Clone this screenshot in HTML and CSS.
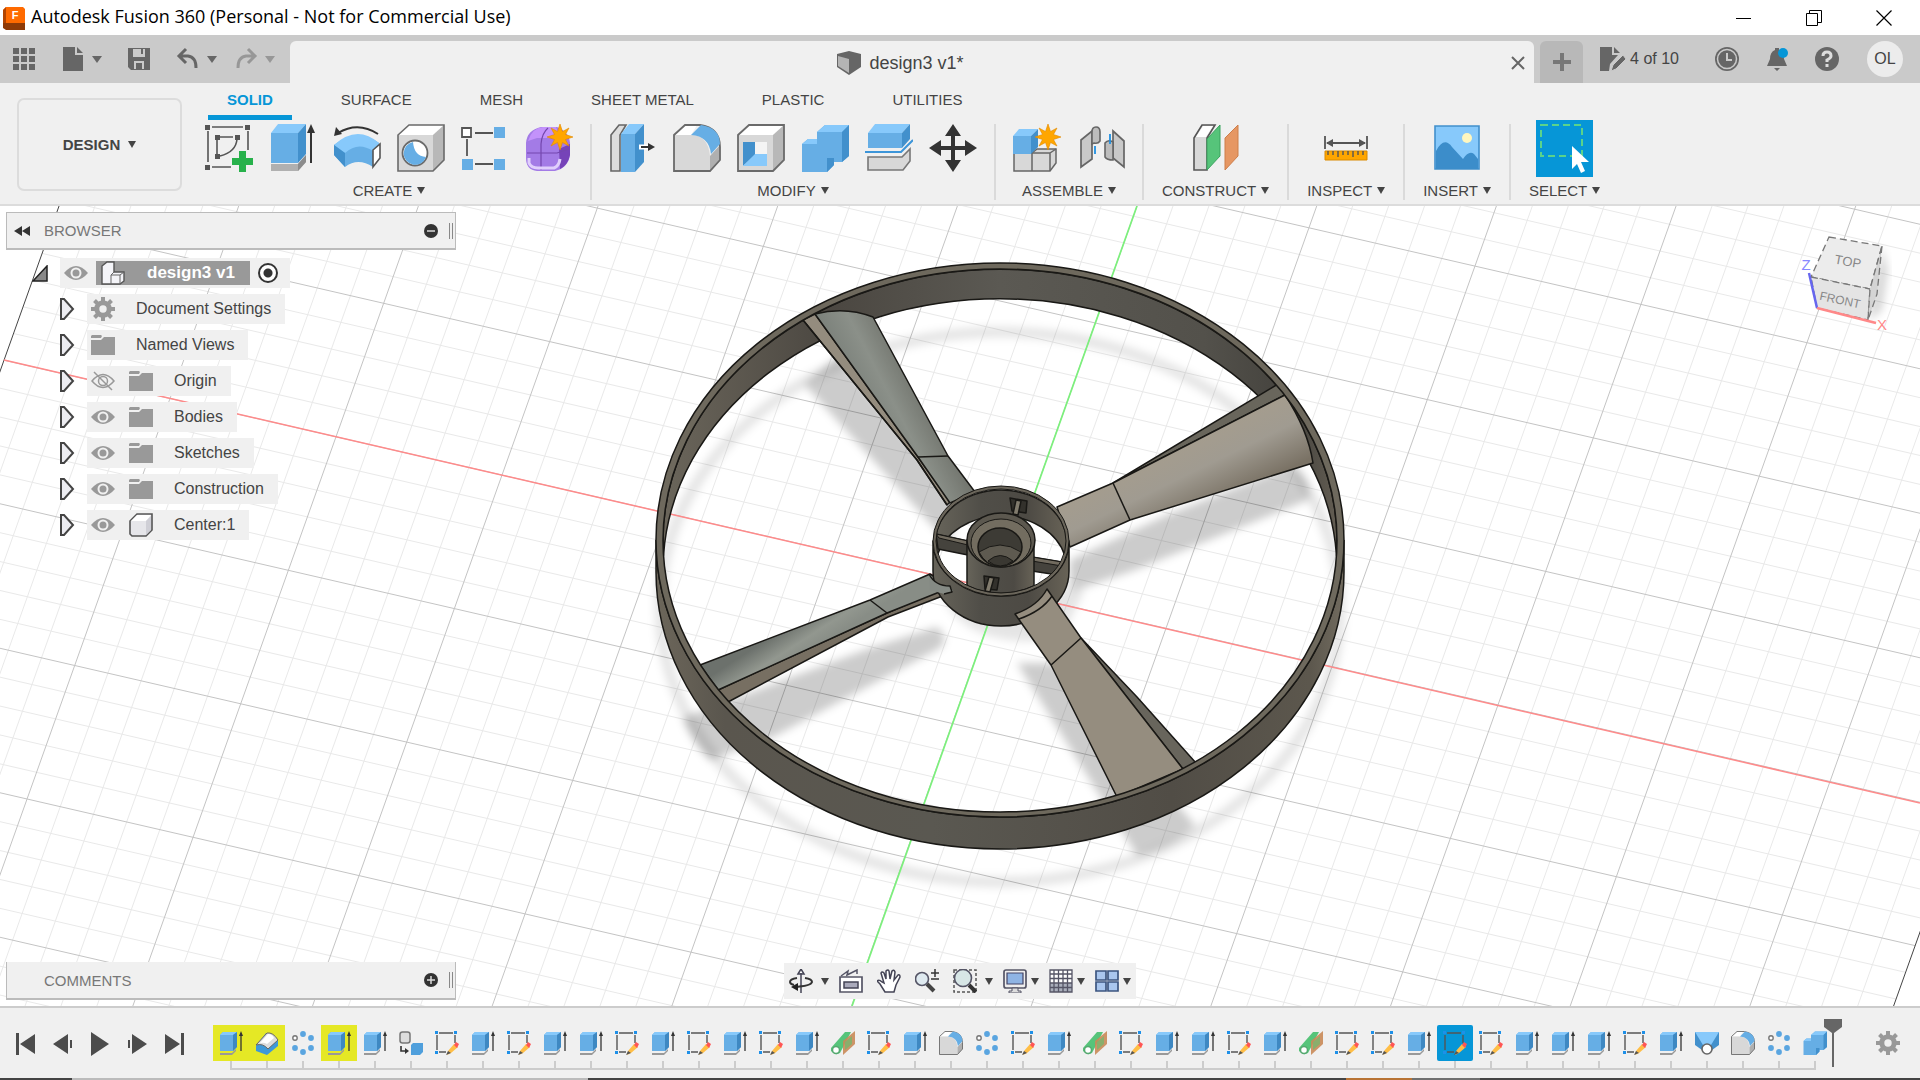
FILE: index.html
```html
<!DOCTYPE html>
<html lang="en">
<head>
    <meta charset="UTF-8">
    <meta name="viewport" content="width=device-width, initial-scale=1.0">
    <title>Autodesk Fusion 360</title>
    <link rel="stylesheet" href="styles.css">
</head>
<body>

<!-- Icon library -->
<svg class="defs" aria-hidden="true">
    <symbol id="i-extrude" viewBox="0 0 48 48">
        <path d="M2 40H29L37 31V38L29 47H2Z" fill="#b0b0b0"/><path d="M29 40 37 31V38L29 47Z" fill="#8c8c8c"/>
        <path d="M2 9H29V39H2Z" fill="#66aee5"/><path d="M2 9 9 0H37L29 9Z" fill="#87c9fb"/><path d="M29 9 37 0V30L29 39Z" fill="#4290cc"/>
        <path d="M42 39V6" stroke="#333" stroke-width="2"/><path d="M42 0 46 9H38Z" fill="#333"/>
    </symbol>
    <symbol id="i-sketch" viewBox="0 0 48 48">
        <path d="M7 3H38M3 7V38M43 7V26M7 43H26M14 13H28M12 16V30M32 15Q31 28 15 32" fill="none" stroke="#555" stroke-width="1.6"/>
        <path d="M0 1H5V6H0ZM40 1H45V6H40ZM0 41H5V46H0ZM10 11H15V16H10ZM30 11H35V16H30ZM10 30H15V35H10Z" fill="#555"/>
        <path d="M34 27H41V34H48V41H41V48H34V41H27V34H34Z" fill="#27b14b"/>
    </symbol>
    <symbol id="i-revolve" viewBox="0 0 48 48">
        <path d="M1 21Q24 3 46 19L40 43Q25 33 12 43L1 31Z" fill="#66aee5"/>
        <path d="M1 21Q24 0 46 19L40 27Q25 17 12 29Z" fill="#87c9fb"/><path d="M1 21 12 29V43L1 31Z" fill="#4290cc"/>
        <path d="M40 26 47 20V34L40 43Z" fill="#fff" stroke="#555" stroke-width="1.6"/>
        <path d="M5 9Q25-3 45 10" fill="none" stroke="#333" stroke-width="2"/><path d="M1 12 3 3 9 10Z" fill="#333"/>
    </symbol>
    <symbol id="i-hole" viewBox="0 0 48 48">
        <path d="M1 11 12 1H47L36 11Z" fill="#fff"/><path d="M36 11 47 1V36L36 47Z" fill="#b8b8b8"/><path d="M1 11H36V47H1Z" fill="#d8d8d8"/>
        <path d="M1 11 12 1H47V36L36 47H1Z" fill="none" stroke="#6a6a6a" stroke-width="1.6"/>
        <circle cx="18" cy="29" r="12.5" fill="#fff" stroke="#6a6a6a" stroke-width="1.8"/>
        <path d="M16 18A11.5 11.5 0 1 0 29 33Q17 32 16 18Z" fill="#66aee5"/>
    </symbol>
    <symbol id="i-pattern" viewBox="0 0 48 48">
        <path d="M14 9H32M6 15V32M14 40H32" stroke="#555" stroke-width="1.8"/>
        <path d="M1 4H10V13H1Z" fill="#fff" stroke="#555" stroke-width="1.8"/>
        <path d="M33 3H44V14H33ZM1 35H12V46H1ZM33 35H44V46H33Z" fill="#66aee5"/>
    </symbol>
    <symbol id="i-form" viewBox="0 0 48 48">
        <path d="M1 19Q2 6 16 3H32Q46 9 45 22V31Q43 44 30 47H12Q1 46 1 34Z" fill="#a37be6"/>
        <path d="M3 17Q7 4 18 3H31L36 15Q34 14 27 14H12Z" fill="#c392fb"/><path d="M34 25 45 20V31Q43 41 35 45Z" fill="#7643b8"/>
        <path d="M16 46V20Q17 9 23 4M2 29H32L44 25" stroke="#7447ae" stroke-width="1.2" fill="none"/>
        <path d="M4 34V39Q6 44 13 44H29Q34 42 35 35" fill="none" stroke="#e0cffc" stroke-width="3"/>
        <use href="#i-star" x="22" y="0" width="26" height="26"/>
    </symbol>
    <symbol id="i-star" viewBox="0 0 26 26">
        <path d="M13 0 15.500 7.500 22 4 18.500 10.500 26 13 18.500 15.500 22 22 15.500 18.500 13 26 10.500 18.500 4 22 7.500 15.500 0 13 7.500 10.500 4 4 10.500 7.500Z" fill="#ffa600" stroke="#e08a00" stroke-width=".6"/>
    </symbol>
    <symbol id="i-press" viewBox="0 0 48 48">
        <path d="M2 11 10 1H17L11 11V47H2Z" fill="#ddd" stroke="#666" stroke-width="1.6"/>
        <path d="M12 10H26V48H12Z" fill="#66aee5"/><path d="M12 10 20 0H35L26 10Z" fill="#87c9fb"/><path d="M26 10 35 0V38L26 48Z" fill="#4290cc"/>
        <path d="M30 23H40" stroke="#fff" stroke-width="5"/><path d="M32 23H42" stroke="#333" stroke-width="2"/><path d="M46 23 39 19V27Z" fill="#333"/>
    </symbol>
    <symbol id="i-fillet" viewBox="0 0 48 48">
        <path d="M1 11 12 1H24L18 11Z" fill="#fff"/><path d="M1 11H18Q35 11 37 32V47H1Z" fill="#d8d8d8"/><path d="M37 32 47 21V36L37 47Z" fill="#b0b0b0"/>
        <path d="M1 47V11L12 1H27Q47 4 47 23V36L37 47Z" fill="none" stroke="#6a6a6a" stroke-width="1.8"/>
        <path d="M18 11 28 1Q47 4 47 20L38 30Q36 12 18 11Z" fill="#66aee5"/>
    </symbol>
    <symbol id="i-shell" viewBox="0 0 48 48">
        <path d="M1 11 12 1H47L36 11Z" fill="#fff"/><path d="M36 11 47 1V36L36 47Z" fill="#b8b8b8"/><path d="M1 11H36V47H1Z" fill="#d8d8d8"/>
        <path d="M1 11 12 1H47V36L36 47H1Z" fill="none" stroke="#6a6a6a" stroke-width="1.8"/>
        <path d="M6 18H30V42H6Z" fill="#f4f4f4"/><path d="M6 18H18V31L6 42Z" fill="#4290cc"/><path d="M18 30H30V42H6Z" fill="#87c9fb"/>
    </symbol>
    <symbol id="i-combine" viewBox="0 0 48 48">
        <path d="M1 20 7 15H16V8L24 1H48V32L41 38H33V41L26 48H1Z" fill="#66aee5"/>
        <path d="M16 8 24 1H48L41 8ZM1 20 7 15H16V20Z" fill="#87c9fb"/><path d="M41 8 48 1V32L41 38ZM33 34V41L26 48V34Z" fill="#4290cc"/>
    </symbol>
    <symbol id="i-split" viewBox="0 0 48 48">
        <path d="M3 9H37V24H3Z" fill="#66aee5"/><path d="M3 9 10 0H45L37 9Z" fill="#87c9fb"/><path d="M37 9 45 0V15L37 24Z" fill="#4290cc"/>
        <path d="M0 28H36L48 16" fill="none" stroke="#3c95d9" stroke-width="2"/>
        <path d="M3 33H37L45 25V37L38 46H3Z" fill="#d8d8d8" stroke="#777" stroke-width="1.6"/>
    </symbol>
    <symbol id="i-move" viewBox="0 0 48 48">
        <path d="M24 6V42M6 24H42" stroke="#333" stroke-width="4"/>
        <path d="M24 0 32 12H16ZM24 48 32 36H16ZM0 24 12 16V32ZM48 24 36 16V32Z" fill="#333"/>
    </symbol>
    <symbol id="i-newcomp" viewBox="0 0 48 48">
        <path d="M1 29H19V47H1ZM19 29 24 25H43V39L37 47H19Z" fill="#d8d8d8" stroke="#666" stroke-width="1.5"/><path d="M19 29H37V47M37 29 43 25" fill="none" stroke="#666" stroke-width="1.5"/>
        <path d="M0 12H18V30H0Z" fill="#66aee5"/><path d="M0 12 6 5H25L18 12Z" fill="#87c9fb"/><path d="M18 12 25 5V23L18 30Z" fill="#4290cc"/>
        <use href="#i-star" x="22" y="0" width="26" height="26"/>
    </symbol>
    <symbol id="i-joint" viewBox="0 0 48 48">
        <path d="M4 16 15 7V35L4 43ZM36 7 47 17V43L36 34Z" fill="#c9c9c9" stroke="#666" stroke-width="1.7"/>
        <path d="M15 8Q15 3 19 3T23 8V17Q21 20 17 19L15 20ZM28 19Q31 15 36 18V36Q30 36 28 33Z" fill="#bdbdbd" stroke="#666" stroke-width="1.6"/>
        <path d="M18 22V30M33 10V20" stroke="#1f8fe0" stroke-width="1.8"/>
    </symbol>
    <symbol id="i-construct" viewBox="0 0 48 48">
        <path d="M2 14 10 1H23L15 14V46H2Z" fill="#d8d8d8" stroke="#555" stroke-width="1.6"/><path d="M4 13 11 2H21L14 13Z" fill="#fff"/>
        <path d="M15 15 28 1V32L15 46Z" fill="#56c47a" stroke="#3aa35f"/><path d="M33 14 46 1V32L33 46Z" fill="#e69763" stroke="#cd7e4b"/>
    </symbol>
    <symbol id="i-measure" viewBox="0 0 48 48">
        <path d="M3 12V25M45 12V25M5 19H43" stroke="#555" stroke-width="1.8"/><path d="M4 19 11 15V23ZM44 19 37 15V23Z" fill="#555"/>
        <path d="M3 27H45V36H3Z" fill="#ffa600" stroke="#d98a00"/><path d="M6 27V31M11 27V31M16 27V33M21 27V31M26 27V31M31 27V33M36 27V31M41 27V31" stroke="#555" stroke-width="1.4"/>
    </symbol>
    <symbol id="i-image" viewBox="0 0 48 48">
        <path d="M2 2H46V45H2Z" fill="#87c9fb" stroke="#4290cc" stroke-width="1.6"/><circle cx="34" cy="14" r="5" fill="#fff7bf"/>
        <path d="M3 27Q11 12 19 23L30 35Q36 26 41 30L45 35V45H3Z" fill="#3c8dca"/>
    </symbol>
    <symbol id="i-select" viewBox="0 0 57 57">
        <path d="M5 5H46V36H5Z" fill="none" stroke="#5bd38a" stroke-width="2" stroke-dasharray="7 4"/>
        <path d="M36 26V49L41 44 45 53 49 51 45 42H53Z" fill="#fff"/>
    </symbol>
    <symbol id="i-eye" viewBox="0 0 24 24"><path d="M0 12Q12-2 24 12Q12 26 0 12Z" fill="#999"/><circle cx="12" cy="12" r="4.500" fill="#999" stroke="#f0f0f0" stroke-width="2"/></symbol>
    <symbol id="i-eyeoff" viewBox="0 0 24 24"><path d="M1 12Q12-1 23 12Q12 25 1 12ZM3 3 21 21" fill="none" stroke="#999" stroke-width="1.5"/><circle cx="12" cy="12" r="4.500" fill="none" stroke="#999" stroke-width="1.5"/></symbol>
    <symbol id="i-folder" viewBox="0 0 24 24"><path d="M0 3 1 2H10L11 3 10 5H0ZM0 7H10L13 4H24V22H0Z" fill="#999"/></symbol>
    <symbol id="i-gear" viewBox="0 0 24 24"><circle cx="12" cy="12" r="6.200" fill="none" stroke="#999" stroke-width="5"/><path d="M12 0V5M12 19V24M0 12H5M19 12H24M3.500 3.500 7 7M17 17 20.500 20.500M20.500 3.500 17 7M7 17 3.500 20.500" stroke="#999" stroke-width="4"/></symbol>
    <symbol id="i-box" viewBox="0 0 24 24"><path d="M1 8 8 1H23V17L17 23H3L1 21Z" fill="#e6e6ea" stroke="#555" stroke-width="1.600"/><path d="M2 8 8 2H22L17 8Z" fill="#fff"/><path d="M17 8 22 3V17L17 22Z" fill="#cfcfd6"/></symbol>
    <symbol id="i-boxes" viewBox="0 0 24 24"><path d="M1 5 6 1H13V11H18L23 11V20L19 23H1Z" fill="#f4f4f8" stroke="#555" stroke-width="1.400"/><path d="M10 14H19V23M10 14V23M13 11 10 14M19 14 23 11" fill="none" stroke="#666"/></symbol>
    <symbol id="i-arrow" viewBox="0 0 16 24"><path d="M2 2H5L14 12 5 22H2Z" fill="#ececf1" stroke="#444" stroke-width="2"/></symbol>
    <!-- timeline -->
    <symbol id="t-extrude" viewBox="0 0 24 24">
        <path d="M1 22H13L17 18V20L13 24H1Z" fill="#999"/><path d="M1 4 4 1H18V16L14 20H1Z" fill="#66aee5"/><path d="M1 4 4 1H18L14 4Z" fill="#87c9fb"/><path d="M14 4 18 1V16L14 20Z" fill="#3e88c2"/>
        <path d="M22 4V20" stroke="#333" stroke-width="1.300"/><path d="M22 0 24 5H20Z" fill="#333"/>
    </symbol>
    <symbol id="t-sketch" viewBox="0 0 24 24">
        <path d="M4 2H18M2 4V19M20 4V12M4 21H11" stroke="#555" stroke-width="1.400"/>
        <path d="M0 0H3V3H0ZM19 0H22V3H19ZM0 20H3V23H0Z" fill="#1e90e8"/>
        <path d="M12 24 13 20 19 13 23 16 16 22Z" fill="#ffbe46"/><path d="M19 14 21 11 24 13 22 17Z" fill="#f55"/><path d="M11 24 13 20 16 22Z" fill="#555"/>
    </symbol>
    <symbol id="t-circular" viewBox="0 0 24 24"><g fill="#5aa5e0"><circle cx="12" cy="3" r="2.900"/><circle cx="20" cy="7" r="2.900"/><circle cx="20" cy="17" r="2.900"/><circle cx="12" cy="21" r="2.900"/><circle cx="4" cy="17" r="2.900"/></g><circle cx="4" cy="7" r="2.200" fill="#fff" stroke="#777" stroke-width="1.400"/></symbol>
    <symbol id="t-patch" viewBox="0 0 24 24"><path d="M1 15 11 2 23 10V15L12 24 1 20Z" fill="#3e98d8"/><path d="M1 14 12 2Q18 1 23 9L13 18Q8 12 1 14Z" fill="#ddd" stroke="#666"/><path d="M5 12 13 3Q17 3 19 7L12 13Q9 11 5 12Z" fill="#fff"/></symbol>
    <symbol id="t-component" viewBox="0 0 24 24"><rect x="1" y="1" width="10" height="11" rx="2.500" fill="#ddd" stroke="#777" stroke-width="1.500"/><path d="M12 14 14 12H24V21L21 24H12Z" fill="#4f9fdc"/><path d="M2 15V20H6" fill="none" stroke="#333" stroke-width="1.600"/><path d="M10 20 6 17V23Z" fill="#333"/></symbol>
    <symbol id="t-plane" viewBox="0 0 24 24"><path d="M0 17 14 1H20L9 22Q4 25 0 20Z" fill="#56c47a"/><circle cx="5" cy="19" r="3.500" fill="#fff" stroke="#56a870" stroke-width="1.500"/><path d="M12 10 24 0V13L12 24Z" fill="#c98a58" opacity=".9"/><path d="M14 11 21 5V13L14 19Z" fill="#8aae6c"/></symbol>
    <symbol id="t-loft" viewBox="0 0 24 24"><path d="M0 1H24V14L17 19H7L0 14Z" fill="#4290cc"/><path d="M0 1H24L16 14H8Z" fill="#87c9fb"/><circle cx="12" cy="18" r="5" fill="#fff" stroke="#666" stroke-width="1.600"/></symbol>
</svg>

<header class="titlebar">
    <svg class="logo" viewBox="0 0 22 24"><path d="M3 1H20L22 3V17H0V4Z" fill="#ff6a00"/><path d="M0 4 3 1V17H0Z" fill="#b34400"/><path d="M0 17H22V24H3L0 22Z" fill="#8f3a06"/><text x="12" y="13" class="logo-letter">F</text></svg>
    <h1>Autodesk Fusion 360 (Personal - Not for Commercial Use)</h1>
    <div class="window-controls">
        <button aria-label="Minimize"><svg viewBox="0 0 16 16"><path d="M0 8.500H15" stroke="#000"/></svg></button>
        <button aria-label="Restore"><svg viewBox="0 0 16 16"><path d="M.5 3.500H11.500V15.500H.5ZM3.500 3.500V.5H15.500V12.500H11.500" fill="none" stroke="#000"/></svg></button>
        <button aria-label="Close"><svg viewBox="0 0 16 16"><path d="M.5.5 15.500 15.500M15.500.5.5 15.500" stroke="#000" stroke-width="1.200"/></svg></button>
    </div>
</header>

<div class="tabbar">
    <div class="quick">
        <button aria-label="Data panel"><svg viewBox="0 0 24 24"><path d="M1 1H7V7H1ZM9 1H15V7H9ZM17 1H23V7H17ZM1 9H7V15H1ZM9 9H15V15H9ZM17 9H23V15H17ZM1 17H7V23H1ZM9 17H15V23H9ZM17 17H23V23H17Z"/></svg></button>
        <button class="has-caret" aria-label="File"><svg viewBox="0 0 24 24"><path d="M2 0H14V8H22V24H2ZM16 0 22 6H16Z"/></svg><i class="caret"></i></button>
        <button aria-label="Save"><svg viewBox="0 0 24 24"><path fill-rule="evenodd" d="M1 1H23V23H4L1 20ZM6 2V10H18V2H16V7H14V2ZM7 22H9V16H15V22H17V14H7Z"/></svg></button>
        <button class="has-caret undo" aria-label="Undo"><svg viewBox="0 0 24 24"><path d="M3 9H12Q20 10 20 21M10 2 3 9 10 16" fill="none" stroke="#666" stroke-width="3"/></svg><i class="caret"></i></button>
        <button class="has-caret dim" aria-label="Redo"><svg viewBox="0 0 24 24"><path d="M21 9H12Q4 10 4 21M14 2 21 9 14 16" fill="none" stroke="#666" stroke-width="3"/></svg><i class="caret"></i></button>
    </div>
    <div class="doc-tab">
        <svg viewBox="0 0 24 24"><path d="M0 3 12 0 24 3V16L12 24 0 16Z" fill="#666"/><path d="M1 5 12 8V22L1 15Z" fill="#b4b4b4"/></svg>
        <span>design3 v1*</span>
        <button aria-label="Close tab"><svg viewBox="0 0 14 14"><path d="M1 1 13 13M13 1 1 13" stroke="#666" stroke-width="2"/></svg></button>
    </div>
    <button class="new-tab" aria-label="New tab"><svg viewBox="0 0 18 18"><path d="M9 0V18M0 9H18" stroke="#777" stroke-width="4"/></svg></button>
    <div class="account">
        <button class="docs"><svg viewBox="0 0 26 24"><path d="M0 0H12V8H18L10 17 9 24H0ZM14 0 20 6H14Z"/><path d="M11 24 13 18 23 8 26 12 16 22Z" stroke="#cacaca"/></svg>4 of 10</button>
        <button aria-label="Job status"><svg viewBox="0 0 24 24"><circle cx="12" cy="12" r="12"/><circle cx="12" cy="12" r="9.500" fill="none" stroke="#cacaca" stroke-width="1.500"/><path d="M12 6V13H17" fill="none" stroke="#cacaca" stroke-width="2"/></svg></button>
        <button aria-label="Notifications"><svg viewBox="0 0 24 24"><path d="M10 1H14V3Q19 5 19 12L22 19H2L5 12Q5 5 10 3ZM9 21H15L12 24Z"/><circle cx="18" cy="6" r="5" fill="#0696d7"/></svg></button>
        <button aria-label="Help"><svg viewBox="0 0 24 24"><circle cx="12" cy="12" r="12"/><path d="M8 9Q8 5 12 5T16 9Q16 11 12 13V15M12 17V20" fill="none" stroke="#ddd" stroke-width="3"/></svg></button>
        <button class="avatar">OL</button>
    </div>
</div>

<section class="ribbon">
    <button class="workspace">DESIGN <i class="caret"></i></button>
    <div class="ribbon-main">
        <nav class="ribbon-tabs">
            <button class="active">SOLID</button>
            <button>SURFACE</button>
            <button>MESH</button>
            <button>SHEET METAL</button>
            <button>PLASTIC</button>
            <button>UTILITIES</button>
        </nav>
        <div class="groups">
            <div class="group">
                <div class="tools">
                    <button aria-label="Create Sketch"><svg><use href="#i-sketch"/></svg></button>
                    <button aria-label="Extrude"><svg><use href="#i-extrude"/></svg></button>
                    <button aria-label="Revolve"><svg><use href="#i-revolve"/></svg></button>
                    <button aria-label="Hole"><svg><use href="#i-hole"/></svg></button>
                    <button aria-label="Pattern"><svg><use href="#i-pattern"/></svg></button>
                    <button aria-label="Create Form"><svg><use href="#i-form"/></svg></button>
                </div>
                <button class="label">CREATE <i class="caret"></i></button>
            </div>
            <div class="group">
                <div class="tools">
                    <button aria-label="Press Pull"><svg><use href="#i-press"/></svg></button>
                    <button aria-label="Fillet"><svg><use href="#i-fillet"/></svg></button>
                    <button aria-label="Shell"><svg><use href="#i-shell"/></svg></button>
                    <button aria-label="Combine"><svg><use href="#i-combine"/></svg></button>
                    <button aria-label="Split Body"><svg><use href="#i-split"/></svg></button>
                    <button aria-label="Move"><svg><use href="#i-move"/></svg></button>
                </div>
                <button class="label">MODIFY <i class="caret"></i></button>
            </div>
            <div class="group">
                <div class="tools">
                    <button aria-label="New Component"><svg><use href="#i-newcomp"/></svg></button>
                    <button aria-label="Joint"><svg><use href="#i-joint"/></svg></button>
                </div>
                <button class="label">ASSEMBLE <i class="caret"></i></button>
            </div>
            <div class="group">
                <div class="tools"><button aria-label="Offset Plane"><svg><use href="#i-construct"/></svg></button></div>
                <button class="label">CONSTRUCT <i class="caret"></i></button>
            </div>
            <div class="group">
                <div class="tools"><button aria-label="Measure"><svg><use href="#i-measure"/></svg></button></div>
                <button class="label">INSPECT <i class="caret"></i></button>
            </div>
            <div class="group">
                <div class="tools"><button aria-label="Insert Image"><svg><use href="#i-image"/></svg></button></div>
                <button class="label">INSERT <i class="caret"></i></button>
            </div>
            <div class="group">
                <div class="tools"><button class="selected" aria-label="Select"><svg><use href="#i-select"/></svg></button></div>
                <button class="label">SELECT <i class="caret"></i></button>
            </div>
        </div>
    </div>
</section>

<main class="canvas">
    <svg class="scene" viewBox="0 206 1920 800" preserveAspectRatio="xMidYMid slice">
        <defs>
            <linearGradient id="g-wall" gradientUnits="userSpaceOnUse" x1="660" x2="1340" y1="0" y2="0"><stop offset="0" stop-color="#6b665b"/><stop offset=".25" stop-color="#4b4741"/><stop offset=".5" stop-color="#5b5953"/><stop offset=".8" stop-color="#53514b"/><stop offset=".93" stop-color="#44423d"/><stop offset="1" stop-color="#655f54"/></linearGradient>
            <linearGradient id="g-side" gradientUnits="userSpaceOnUse" x1="656" x2="1344" y1="0" y2="0"><stop offset="0" stop-color="#6c665a"/><stop offset=".1" stop-color="#5a564e"/><stop offset=".4" stop-color="#5a5851"/><stop offset=".75" stop-color="#514d46"/><stop offset=".95" stop-color="#5c574d"/><stop offset="1" stop-color="#716b5f"/></linearGradient>
            <linearGradient id="g-hub" x1="0" x2="1" y1="0" y2="0"><stop offset="0" stop-color="#67645a"/><stop offset=".35" stop-color="#504e48"/><stop offset=".7" stop-color="#4d4a44"/><stop offset="1" stop-color="#686357"/></linearGradient>
            <linearGradient id="g-s1" gradientUnits="userSpaceOnUse" x1="850" y1="410" x2="912" y2="378"><stop offset="0" stop-color="#747a74"/><stop offset=".6" stop-color="#8b9089"/><stop offset="1" stop-color="#747770"/></linearGradient>
            <linearGradient id="g-s2" gradientUnits="userSpaceOnUse" x1="1190" y1="430" x2="1224" y2="500"><stop offset="0" stop-color="#a69d8d"/><stop offset=".5" stop-color="#a09b91"/><stop offset="1" stop-color="#7a7265"/></linearGradient>
            <linearGradient id="g-s3" gradientUnits="userSpaceOnUse" x1="785" y1="628" x2="803" y2="656"><stop offset="0" stop-color="#6c716c"/><stop offset=".6" stop-color="#92978f"/><stop offset="1" stop-color="#888d86"/></linearGradient>
            <filter id="soft" x="-20%" y="-20%" width="140%" height="140%"><feGaussianBlur stdDeviation="4"/></filter>
        </defs>
        <rect y="206" width="1920" height="800" fill="#fff"/>
        <g id="grid"></g>
        <!-- shadows on the ground -->
        <g filter="url(#soft)">
            <ellipse cx="1000" cy="607" rx="340" ry="275" fill="none" stroke="#000" stroke-opacity=".11" stroke-width="10"/>
            <g fill="#000" fill-opacity=".2">
                <path d="M805 385 838 356 960 500 950 545Z"/>
                <path d="M1290 466Q1312 480 1308 500L1135 570 1070 592V560L1167 515Z"/>
                <path d="M937 627Q950 638 940 648L773 737 710 760Q690 740 683 718L730 700 873 647Z"/>
                <path d="M1017 663H1055L1195 825Q1170 848 1137 855L1118 825Z"/>
            </g>
            <path d="M940 590Q960 650 1060 640L1085 590Z" fill="#000" fill-opacity=".1"/>
        </g>
        <path d="M4 360 1920 803" stroke="#ff8a8a" stroke-width="1.500"/>
        <path d="M1137 206 852 1006" stroke="#7cf07c" stroke-width="1.700"/>
        <g stroke="#191815" stroke-width="1.500" stroke-linejoin="round">
            <path d="M663.500 555.500A337 271.500 0 1 1 1336.500 555.500A337 271.500 0 0 0 663.500 555.500Z" fill="url(#g-wall)"/>
            <!-- blades -->
            <path d="M803 320 815 314 918 457 950 502 947 505 917 460Z" fill="#948c7e"/>
            <path d="M815 314Q845 306 873 317L948 456 975 492 950 503 918 457Z" fill="url(#g-s1)"/>
            <path d="M918 457 948 456M803 320 917 460 947 505" fill="none"/>
            <path d="M1113 483 1278 384 1285 395Z" fill="#69665c"/>
            <path d="M1057 507 1113 483 1285 395Q1308 430 1313 463L1130 520 1070 547Z" fill="url(#g-s2)"/>
            <path d="M1113 483 1130 520" fill="none"/>
            <path d="M718 690 887 613 950 586 953 592 888 617 728 702Z" fill="#776f62"/>
            <path d="M700 665 870 600 930 574 952 587 887 613 718 690Z" fill="url(#g-s3)"/>
            <path d="M870 600 887 613" fill="none"/>
            <path d="M1081 638 1137 697 1196 763 1183 769Z" fill="#68655c"/>
        </g>
        <!-- hub -->
        <g stroke="#191815" stroke-width="1.500" stroke-linejoin="round">
            <path d="M937 556A66 53 0 1 1 1065 556A66 53 0 0 0 937 556Z" fill="url(#g-hub)"/>
            <path d="M1010 498 1027 501 1026 513 1012 511Z" fill="#33312c"/><path d="M1016 500 1021 501 1018 515 1013 514Z" fill="#817b6d"/>
            <path d="M936 534 968 541V555L938 549Z" fill="#45433d"/><path d="M936 534 968 541V545L939 538Z" fill="#716b5f" stroke-width="1"/>
            <path d="M1032 557 1062 562 1058 575 1032 571Z" fill="#45433d"/><path d="M1032 557 1062 562V566L1032 561Z" fill="#716b5f" stroke-width="1"/>
            <path d="M967 540V586Q1001 601 1034 586V540Z" fill="url(#g-hub)"/>
            <ellipse cx="1001" cy="540" rx="34" ry="27" fill="#5c584f"/>
            <ellipse cx="1001" cy="543" rx="30" ry="24" fill="#736d60" stroke-width="1"/>
            <ellipse cx="1000" cy="547" rx="22" ry="19" fill="#3d3b35"/>
            <path d="M979 552Q1000 538 1021 552Q1014 566 1000 566T979 552Z" fill="#5e5a50" stroke-width="1"/>
            <path d="M988 561Q1000 550 1013 561Q1000 571 988 561Z" fill="#3a3832" stroke-width="1"/>
            <path d="M984 576 999 578 997 590 985 589Z" fill="#33312c"/><path d="M989 577 994 578 990 592 985 591Z" fill="#817b6d"/>
            <path d="M933 541A68 55 0 0 0 1069 541V571A68 55 0 0 1 933 571Z" fill="url(#g-hub)"/>
            <path fill-rule="evenodd" d="M933 541A68 55 0 0 1 1069 541A68 55 0 0 1 933 541ZM936 541A65 52 0 0 0 1066 541A65 52 0 0 0 936 541Z" fill="#6b665b" stroke-width="1"/>
            <path d="M929 574Q935 586 950 586L953 591 944 594 930 590Z" fill="#858a84" stroke="none"/>
            <path d="M929 574Q935 586 950 586L952 592 944 594" fill="none"/>
            <path d="M1015 614Q1038 606 1047 589L1081 638 1183 769 1117 797 1051 665Z" fill="#958d7f"/>
            <path d="M1051 665 1081 638M1019 619Q1042 611 1052 596" fill="none"/>
        </g>
        <!-- outer ring front -->
        <g stroke="#191815" stroke-width="1.500">
            <path d="M656 540A344 277 0 0 0 1344 540V572A344 277 0 0 1 656 572Z" fill="url(#g-side)"/>
            <path fill-rule="evenodd" d="M656 540A344 277 0 0 1 1344 540A344 277 0 0 1 656 540ZM663 540.500A337 271.500 0 0 0 1337 540.500A337 271.500 0 0 0 663 540.500Z" fill="#6e695d"/>
        </g>
    </svg>

    <svg class="viewcube" viewBox="1796 226 100 110">
        <path d="M1882 246 1888 270 1882 310 1868 322Z" fill="#000" opacity=".16" filter="url(#soft)"/>
        <g fill="#ececec" stroke="#777" stroke-width="1.300" stroke-dasharray="7 4">
            <path d="M1829 237 1882 246 1870 289 1811 277Z"/><path d="M1811 277 1870 289 1868 320 1817 308Z" fill="#e4e4e4"/><path d="M1882 246 1877 294 1868 320 1870 289Z" fill="#d4d4d4"/>
        </g>
        <path d="M1809 273 1817 308" stroke="#6666ef" stroke-width="2.500"/><path d="M1817 308 1876 323" stroke="#f88" stroke-width="2.500"/>
        <text x="1848" y="266" transform="rotate(10 1848 261)" class="face top">TOP</text>
        <text x="1840" y="304" transform="rotate(12 1840 300)" class="face">FRONT</text>
        <text x="1806" y="270" class="axis z">Z</text><text x="1882" y="330" class="axis x">X</text>
    </svg>

    <aside class="browser">
        <div class="panel-head">
            <button class="collapse" aria-label="Collapse"><svg viewBox="0 0 16 10"><path d="M8 0V10L0 5ZM16 0V10L8 5Z" fill="#333"/></svg></button>
            <span>BROWSER</span>
            <button class="round" aria-label="Minimize browser"><svg viewBox="0 0 14 14"><circle cx="7" cy="7" r="7" fill="#333"/><path d="M3 7H11" stroke="#ddd" stroke-width="1.500"/></svg></button>
            <i class="grip"></i>
        </div>
        <ul class="tree">
            <li class="root">
                <svg class="open" viewBox="0 0 16 17"><path d="M1 16H15V1Z" fill="#888" stroke="#222" stroke-width="1.500"/></svg>
                <div class="row">
                    <svg><use href="#i-eye"/></svg>
                    <span class="name"><svg><use href="#i-boxes"/></svg>design3 v1</span>
                    <input type="radio" checked aria-label="Activate design3 v1">
                </div>
            </li>
            <li><svg class="arrow"><use href="#i-arrow"/></svg><div class="row"><svg><use href="#i-gear"/></svg><span>Document Settings</span></div></li>
            <li><svg class="arrow"><use href="#i-arrow"/></svg><div class="row"><svg><use href="#i-folder"/></svg><span>Named Views</span></div></li>
            <li><svg class="arrow"><use href="#i-arrow"/></svg><div class="row"><svg><use href="#i-eyeoff"/></svg><svg><use href="#i-folder"/></svg><span>Origin</span></div></li>
            <li><svg class="arrow"><use href="#i-arrow"/></svg><div class="row"><svg><use href="#i-eye"/></svg><svg><use href="#i-folder"/></svg><span>Bodies</span></div></li>
            <li><svg class="arrow"><use href="#i-arrow"/></svg><div class="row"><svg><use href="#i-eye"/></svg><svg><use href="#i-folder"/></svg><span>Sketches</span></div></li>
            <li><svg class="arrow"><use href="#i-arrow"/></svg><div class="row"><svg><use href="#i-eye"/></svg><svg><use href="#i-folder"/></svg><span>Construction</span></div></li>
            <li><svg class="arrow"><use href="#i-arrow"/></svg><div class="row"><svg><use href="#i-eye"/></svg><svg><use href="#i-box"/></svg><span>Center:1</span></div></li>
        </ul>
    </aside>

    <div class="comments panel-head">
        <span>COMMENTS</span>
        <button class="round" aria-label="Add comment"><svg viewBox="0 0 14 14"><circle cx="7" cy="7" r="7" fill="#333"/><path d="M3 7H11M7 3V11" stroke="#ddd" stroke-width="1.500"/></svg></button>
        <i class="grip"></i>
    </div>

    <div class="navbar">
        <button class="has-caret wide" aria-label="Orbit"><svg viewBox="0 0 24 24"><path d="M12 4V24M9 5 12 0 15 5Z" fill="#fff" stroke="#445" stroke-width="1.500"/><path d="M16 9Q23 10 23 13 22 17 5 18M8 9Q1 10 1 13 1 15 5 16" fill="none" stroke="#333" stroke-width="2"/><path d="M2 18 9 14V22Z" fill="#222"/></svg><i class="caret"></i></button>
        <button aria-label="Look At"><svg viewBox="0 0 24 24"><path d="M1 8H23V23H1Z" fill="#fff" stroke="#556" stroke-width="1.700"/><path d="M5 13H19V19H5Z" fill="#aab" stroke="#445" stroke-width="1.500"/><path d="M2 7 9 2 8 6 18 1V5" fill="none" stroke="#556" stroke-width="1.500"/></svg></button>
        <button aria-label="Pan"><svg viewBox="0 0 24 24"><path d="M8 23 3 15 0 12Q2 10 5 13L7 14 4 4Q5 2 7 4L9 10 9 2Q11 0 12 2L13 10 15 2Q17 0 18 3L17 11 21 6Q23 5 23 8L19 16 17 23Z" fill="#fff" stroke="#445" stroke-width="1.500"/></svg></button>
        <button aria-label="Zoom"><svg viewBox="0 0 24 24"><circle cx="7" cy="10" r="6.500" fill="#dfeaf0" stroke="#556" stroke-width="1.600"/><path d="M12 15 19 22" stroke="#444" stroke-width="4"/><path d="M20 0V8M16 4H24M16 10H24" stroke="#333" stroke-width="1.500"/></svg></button>
        <button class="has-caret wide" aria-label="Fit"><svg viewBox="0 0 24 24"><path d="M1 1H23V23H1Z" fill="none" stroke="#555" stroke-width="1.500" stroke-dasharray="3 2"/><circle cx="10" cy="9" r="8.500" fill="#d7e6e6" stroke="#556" stroke-width="1.600"/><path d="M16 16 23 23" stroke="#333" stroke-width="4"/></svg><i class="caret"></i></button>
        <button class="has-caret" aria-label="Display Settings"><svg viewBox="0 0 24 24"><rect x="1" y="1" width="22" height="18" rx="2" fill="#eee" stroke="#556" stroke-width="1.700"/><path d="M4 4H20V15H4Z" fill="#8fb4e4" stroke="#446" stroke-width="1.200"/><path d="M9 19H15V22H18V24H6V22H9Z" fill="#ddd" stroke="#556"/></svg><i class="caret"></i></button>
        <button class="has-caret" aria-label="Grid and Snaps"><svg viewBox="0 0 24 24"><path d="M1 1H23V23H1Z" fill="#fff"/><path d="M1 14H23V23H1Z" fill="#a9aebb"/><path d="M1 1H23V23H1ZM5 1V23M9.500 1V23M14 1V23M18.500 1V23M1 5H23M1 9.500H23M1 14H23M1 18.500H23" fill="none" stroke="#556" stroke-width="1.300"/></svg><i class="caret"></i></button>
        <button class="has-caret" aria-label="Viewports"><svg viewBox="0 0 24 24"><path d="M1 2H11V11H1ZM13 2H23V11H13ZM1 13H11V22H1ZM13 13H23V22H13Z" fill="#a9c6ee" stroke="#3d5680" stroke-width="1.700"/></svg><i class="caret"></i></button>
    </div>
</main>

<footer class="timeline">
    <div class="playback">
        <button aria-label="Go to start"><svg viewBox="0 0 20 24"><path d="M0 1H3V23H0ZM19 2V22L4 12Z"/></svg></button>
        <button aria-label="Step back"><svg viewBox="0 0 20 24"><path d="M15 2V22L0 12ZM17 8H19V16H17Z"/></svg></button>
        <button aria-label="Play"><svg viewBox="0 0 20 24"><path d="M1 0V24L19 12Z"/></svg></button>
        <button aria-label="Step forward"><svg viewBox="0 0 20 24"><path d="M5 2V22L20 12ZM1 8H3V16H1Z"/></svg></button>
        <button aria-label="Go to end"><svg viewBox="0 0 20 24"><path d="M17 1H20V23H17ZM1 2V22L16 12Z"/></svg></button>
    </div>
    <ol id="features"></ol>
    <svg class="marker" viewBox="0 0 18 48"><path d="M0 0H18V8L10 14V48H8V14L0 8Z" fill="#666"/></svg>
    <button class="settings" aria-label="Timeline settings"><svg><use href="#i-gear"/></svg></button>
</footer>
<div class="taskbar-edge"></div>

<script src="script.js"></script>
</body>
</html>
```
FILE: styles.css
```css
* {
    box-sizing: border-box;
}
body {
    margin: 0;
    height: 100vh;
    display: flex;
    flex-direction: column;
    overflow: hidden;
    font-family: "Liberation Sans", Arial, sans-serif;
    font-size: 16px;
    color: #444;
    background-color: #f0f0f0;
}
button {
    font: inherit;
    color: inherit;
    background: none;
    border: none;
    padding: 0;
    display: flex;
    align-items: center;
    justify-content: center;
    cursor: pointer;
}
svg {
    display: block;
    flex: none;
}
.defs {
    position: absolute;
    width: 0;
    height: 0;
}
.caret {
    flex: none;
    border: 4px solid transparent;
    border-top: 7px solid #444;
    border-bottom: 0;
}

/* Title bar */
.titlebar {
    height: 35px;
    flex: none;
    display: flex;
    align-items: center;
    gap: 6px;
    padding: 0 1px 0 3px;
    background-color: #fff;
}
.titlebar h1 {
    margin: 0;
    font: 18px/33px "Open Sans", "Noto Sans", sans-serif;
    height: 35px;
    color: #000;
}
.logo {
    width: 22px;
    height: 24px;
}
.logo-letter {
    font: bold 11px "Liberation Sans", sans-serif;
    fill: #fff;
    text-anchor: middle;
}
.window-controls {
    display: flex;
    margin-left: auto;
}
.window-controls button {
    width: 70px;
    height: 35px;
}
.window-controls svg {
    width: 16px;
    height: 16px;
}

/* Document tab bar */
.tabbar {
    height: 48px;
    flex: none;
    display: flex;
    padding-top: 6px;
    background-color: #cacaca;
}
.quick {
    width: 290px;
    display: flex;
    align-items: center;
    gap: 25px;
    padding: 0 0 6px 12px;
}
.quick svg,
.account svg {
    width: 24px;
    height: 24px;
    fill: #666;
}
.quick .has-caret {
    gap: 7px;
}
.quick .undo {
    margin-right: -8px;
}
.quick .caret {
    border-width: 7px 5px 0;
    border-top-color: #666;
}
.quick .dim {
    opacity: .5;
}
.doc-tab {
    flex: 1;
    display: flex;
    align-items: center;
    justify-content: center;
    gap: 8px;
    padding: 2px 9px 0 8px;
    font-size: 18px;
    background-color: #f0f0f0;
    border-radius: 6px 6px 0 0;
}
.doc-tab svg {
    width: 24px;
    height: 24px;
}
.doc-tab > svg {
    margin-left: auto;
}
.doc-tab button {
    margin-left: auto;
}
.doc-tab button svg {
    width: 14px;
    height: 14px;
}
.new-tab {
    width: 43px;
    margin-left: 6px;
    background-color: #b8b8b8;
    border-radius: 6px 6px 0 0;
}
.new-tab svg {
    width: 18px;
    height: 18px;
}
.account {
    display: flex;
    align-items: center;
    gap: 26px;
    padding: 0 17px 6px;
}
.account .docs {
    gap: 4px;
    margin-right: 10px;
}
.account .docs svg {
    width: 26px;
}
.account .avatar {
    width: 36px;
    height: 36px;
    border-radius: 50%;
    background-color: #ececec;
    margin-left: 2px;
}

/* Ribbon */
.ribbon {
    height: 123px;
    flex: none;
    display: flex;
    border-bottom: 2px solid #dcdcdc;
}
.workspace {
    width: 165px;
    height: 93px;
    margin: 15px 6px 0 17px;
    gap: 8px;
    font-size: 15px;
    font-weight: bold;
    border: 2px solid #dcdcdc;
    border-radius: 7px;
}
.ribbon-tabs {
    display: flex;
    gap: 30px;
    padding-left: 20px;
    height: 37px;
}
.ribbon-tabs button {
    padding: 1px 19px 0;
    font-size: 15px;
    border-bottom: 5px solid transparent;
}
.ribbon-tabs .active {
    font-weight: bold;
    color: #0696d7;
    border-color: #0696d7;
}
.groups {
    display: flex;
}
.group {
    display: flex;
    flex-direction: column;
    align-items: center;
    height: 84px;
    background: linear-gradient(#dadada, #dadada) right 4px / 2px 76px no-repeat;
    padding-right: 2px;
}
.group:last-child {
    background: none;
}
.tools {
    display: flex;
    align-items: center;
    gap: 16px;
    height: 57px;
    padding: 0 17px;
}
.tools svg {
    width: 48px;
    height: 48px;
}
.tools .selected {
    background-color: #0696d7;
}
.tools .selected svg {
    width: 57px;
    height: 57px;
}
.label {
    gap: 5px;
    height: 28px;
    padding: 0 18px;
    font-size: 15px;
}

/* Canvas */
.canvas {
    position: relative;
    flex: 1;
    min-height: 0;
    background-color: #fff;
}
.scene {
    width: 100%;
    height: 100%;
}
.minor {
    stroke: #e9e9e9;
}
.major {
    stroke: #c4c4c4;
}
.edge {
    stroke: #444;
}
.viewcube {
    position: absolute;
    top: 20px;
    right: 24px;
    width: 100px;
    height: 110px;
}
.face {
    font: 12px "Liberation Sans", sans-serif;
    fill: #888;
    text-anchor: middle;
}
.face.top {
    font-size: 13px;
}
.axis {
    font: 15px "Liberation Sans", sans-serif;
    text-anchor: middle;
}
.axis.z {
    fill: #88f;
}
.axis.x {
    fill: #f88;
}

/* Browser and comments panels */
.browser {
    position: absolute;
    top: 6px;
    left: 6px;
    width: 450px;
}
.panel-head {
    display: flex;
    align-items: center;
    height: 38px;
    font-size: 15px;
    color: #777;
    background-color: #f0f0f0;
    border: 1px solid #bbb;
    border-width: 1px 1px 2px;
}
.collapse {
    width: 37px;
    padding-left: 7px;
    justify-content: flex-start;
}
.collapse svg {
    width: 16px;
    height: 10px;
}
.round {
    margin-left: auto;
    margin-right: 11px;
}
.round svg {
    width: 14px;
    height: 14px;
}
.grip {
    width: 4px;
    height: 16px;
    margin-right: 2px;
    border: 1px solid #888;
    border-width: 0 1px;
}
.comments {
    position: absolute;
    left: 6px;
    bottom: 6px;
    width: 450px;
    padding-left: 37px;
    border-top: 0;
}
.tree {
    list-style: none;
    margin: 8px 0 0;
    padding: 0;
}
.tree li {
    display: flex;
    align-items: center;
    height: 30px;
    margin-bottom: 6px;
    padding-left: 53px;
}
.tree .root {
    padding-left: 26px;
}
.tree svg {
    width: 24px;
    height: 24px;
}
.tree .arrow {
    width: 16px;
}
.tree .open {
    width: 16px;
    height: 17px;
}
.row {
    display: flex;
    align-items: center;
    gap: 14px;
    height: 30px;
    margin-left: 12px;
    padding: 0 14px 0 4px;
    background-color: #f0f0f0;
}
.row > span {
    margin-left: 7px;
}
.root .row {
    gap: 8px;
    padding-right: 12px;
}
.root .name {
    display: flex;
    align-items: center;
    gap: 22px;
    height: 24px;
    margin-left: 0;
    padding: 0 15px 0 5px;
    font-size: 17px;
    font-weight: bold;
    color: #fff;
    background-color: #999;
}
.root input {
    appearance: none;
    width: 20px;
    height: 20px;
    margin: 0;
    border: 2px solid #333;
    border-radius: 50%;
    background: radial-gradient(#333 4px, #fff 5px);
}

/* Navigation bar */
.navbar {
    position: absolute;
    left: 50%;
    bottom: 7px;
    transform: translateX(-50%);
    display: flex;
    align-items: center;
    gap: 14px;
    height: 36px;
    padding: 0 9px 0 5px;
    background-color: #f0f0f0;
}
.navbar svg {
    width: 24px;
    height: 24px;
}
.navbar .has-caret {
    gap: 4px;
    margin-right: -4px;
}
.navbar .wide {
    gap: 8px;
}

/* Timeline */
.timeline {
    height: 72px;
    flex: none;
    display: flex;
    align-items: center;
    padding: 0 20px 0 7px;
    border-top: 2px solid #ccc;
}
.playback {
    display: flex;
    margin-right: 21px;
    padding-top: 2px;
}
.playback button {
    width: 37px;
}
.playback svg {
    width: 20px;
    height: 24px;
    fill: #4c4c4c;
}
.timeline ol {
    display: flex;
    align-self: flex-start;
    list-style: none;
    margin: 0;
    padding: 17px 0 0;
}
.timeline li::after {
    content: "";
    display: block;
    height: 9px;
    background:
        linear-gradient(#ccc, #ccc) center top / 2px 100% no-repeat,
        linear-gradient(#ccc, #ccc) right bottom / 100% 2px no-repeat;
}
.timeline li:first-child::after {
    background-size: 2px 100%, 50% 2px;
}
.timeline li:last-child::after {
    background-position: center top, left bottom;
    background-size: 2px 100%, 50% 2px;
}
.feature {
    width: 36px;
    height: 36px;
}
.feature.warn {
    background-color: #e5e825;
}
.feature.picked {
    background-color: #0696d7;
    border-radius: 2px;
}
.feature svg,
.settings svg {
    width: 24px;
    height: 24px;
}
.marker {
    width: 18px;
    height: 48px;
    margin-left: -9px;
}
.settings {
    margin-left: auto;
}
.taskbar-edge {
    height: 2px;
    flex: none;
    background: linear-gradient(90deg, #444 72px, #bbb 72px 588px, #444 588px 1346px, #b87333 1346px 1412px, #707070 1412px 1480px, #444 1480px);
}
```
FILE: script.js
```js
// Timeline features in build order
const features = [
    'extrude!', 'patch!', 'circular', 'extrude!', 'extrude', 'component', 'sketch', 'extrude', 'sketch',
    'extrude', 'extrude', 'sketch', 'extrude', 'sketch', 'extrude', 'sketch', 'extrude', 'plane',
    'sketch', 'extrude', 'fillet', 'circular', 'sketch', 'extrude', 'plane', 'sketch', 'extrude',
    'extrude', 'sketch', 'extrude', 'plane', 'sketch', 'sketch', 'extrude', 'sketch*', 'sketch',
    'extrude', 'extrude', 'extrude', 'sketch', 'extrude', 'loft', 'fillet', 'circular', 'combine'
];
const shared = ['fillet', 'combine'];

document.getElementById('features').innerHTML = features.map(item => {
    const name = item.replace(/[!*]/, '');
    const state = item.endsWith('!') ? ' warn' : item.endsWith('*') ? ' picked' : '';
    const icon = (shared.includes(name) ? 'i-' : 't-') + name;
    return `<li><button class="feature${state}" aria-label="${name}"><svg><use href="#${icon}"/></svg></button></li>`;
}).join('');

// Ground grid: 5 minor cells per major cell, centred on the origin
const origin = { x: 1000, y: 590 };
const u = { x: 33.2, y: 7.66 };
const v = { x: -9.53, y: 26.7 };

function point(i, j) {
    return `${origin.x + i * u.x + j * v.x} ${origin.y + i * u.y + j * v.y}`;
}

const paths = { minor: '', major: '', edge: '' };
for (let i = -30; i <= 29; i++) {
    const kind = i === -30 || i === 29 ? 'edge' : i % 5 === 0 ? 'major' : 'minor';
    paths[kind] += `M${point(i, -30)}L${point(i, 30)}`;
}
for (let j = -30; j <= 30; j++) {
    paths[j % 5 === 0 ? 'major' : 'minor'] += `M${point(-30, j)}L${point(29, j)}`;
}
document.getElementById('grid').innerHTML = Object.keys(paths)
    .map(kind => `<path class="${kind}" d="${paths[kind]}"/>`).join('');
```
